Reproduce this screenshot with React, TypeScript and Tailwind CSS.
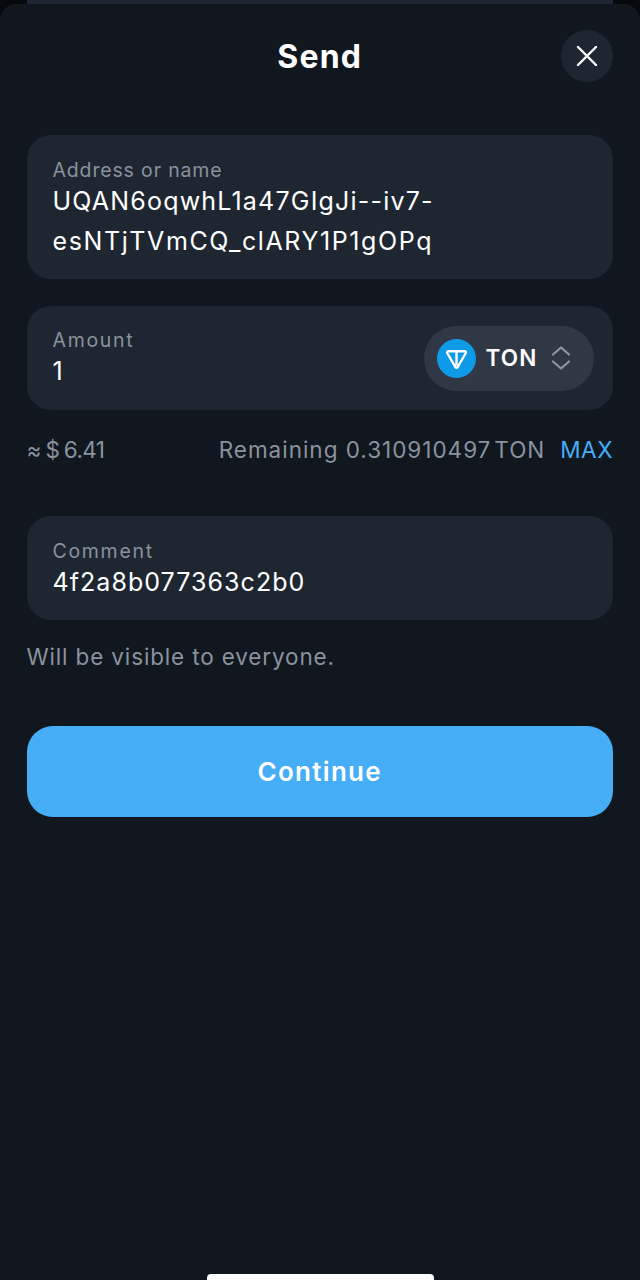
import React from "react";

function Field({ className, children }: { className: string; children: React.ReactNode }) {
  return <div className={`bg-[#1e2731] rounded-[24px] px-[26px] ${className}`}>{children}</div>;
}

export default function App() {
  return (
    <div
      className="relative w-[640px] h-[1280px] overflow-hidden bg-[#07090d] pt-[4px]"
      style={{ fontFamily: '"Inter", "Liberation Sans", sans-serif' }}
    >
      <div className="absolute top-0 left-[27px] w-[586px] h-[4px] bg-[#1e2731]" />
      <div className="h-full bg-[#10171f] rounded-t-[16px] pl-[26.5px] pr-[27px]">
        {/* header */}
        <div className="relative h-[131px] flex justify-center pt-[33px]">
          <h1 className="text-white text-[32px] leading-[40px] font-bold tracking-[1.2px]">Send</h1>
          <button className="absolute right-0 top-[26px] w-[52px] h-[52px] rounded-full bg-[#1e2731] flex items-center justify-center">
            <svg width="22" height="22" viewBox="0 0 22 22" fill="none" stroke="#fff" strokeWidth="2.4" strokeLinecap="round">
              <path d="M2 2l18 18M20 2L2 20" />
            </svg>
          </button>
        </div>

        <Field className="h-[144px] pt-[23px]">
          <p className="text-[#8a929e] text-[19.5px] leading-[24px] tracking-[0.85px]">Address or name</p>
          <p className="text-white text-[25px] leading-[40px] -mt-[1px]">
            <span className="tracking-[1.2px]">UQAN6oqwhL1a47GIgJi--iv7-</span>
            <br />
            <span className="tracking-[1.6px]">esNTjTVmCQ_clARY1P1gOPq</span>
          </p>
        </Field>

        <div className="mt-[27px] bg-[#1e2731] rounded-[24px] h-[104px] pl-[26px] pr-[19.5px] flex items-center justify-between">
          <div className="pt-[2px]">
            <p className="text-[#8a929e] text-[19.5px] leading-[24px] tracking-[1.7px] -mt-[1px]">Amount</p>
            <p className="text-white text-[25px] leading-[36px] mt-[1px]">1</p>
          </div>
          <div className="w-[170px] h-[65px] rounded-full bg-[#303845] flex items-center pl-[13px]">
            <svg width="39" height="39" viewBox="0 0 39 39">
              <circle cx="19.5" cy="19.5" r="19.5" fill="#0f9ae8" />
              <path
                d="M11.2 12.3h16.6c.9 0 1.4.9 1 1.7l-8.3 14.3a1.1 1.1 0 0 1-1.9 0L10.2 14c-.4-.8.1-1.7 1-1.7zM19.5 13.5v13"
                fill="none"
                stroke="#fff"
                strokeWidth="2.4"
                strokeLinejoin="round"
              />
            </svg>
            <span className="ml-[10px] text-white text-[22.5px] font-semibold tracking-[1.2px]">TON</span>
            <svg className="ml-[13px]" width="20" height="26" viewBox="0 0 20 26" fill="none" stroke="#8f96a1" strokeWidth="2.2" strokeLinecap="round" strokeLinejoin="round">
              <path d="M2 9.5L10 2.5l8 7M2 16.5l8 7 8-7" />
            </svg>
          </div>
        </div>

        <div className="mt-[26px] h-[28px] flex items-center text-[#8a929e] text-[22.5px] leading-[28px]">
          <span>≈</span>
          <span className="ml-[4px]">$</span>
          <span className="ml-[4px] tracking-[-0.6px]">6.41</span>
          <span className="ml-auto tracking-[0.98px]">Remaining 0.310910497</span>
          <span className="ml-[3px] tracking-[0.98px]">TON</span>
          <span className="ml-[15px] text-[#46aef7] tracking-[0.5px]">MAX</span>
        </div>

        <Field className="mt-[52px] h-[104px] pt-[22.5px]">
          <p className="text-[#8a929e] text-[19.5px] leading-[24px] tracking-[1.7px]">Comment</p>
          <p className="text-white text-[25px] leading-[34px] tracking-[1.05px] mt-[2.5px]">4f2a8b077363c2b0</p>
        </Field>

        <p className="mt-[23px] text-[#8a929e] text-[22.5px] leading-[28px] tracking-[0.85px]">Will be visible to everyone.</p>

        <button className="mt-[55px] w-full h-[91px] rounded-[26px] bg-[#46aef7] text-white text-[26px] font-semibold tracking-[1.3px]">
          Continue
        </button>
      </div>
      <div className="absolute bottom-0 left-[207px] w-[227px] h-[6px] bg-white rounded-t-[4px]" />
    </div>
  );
}
